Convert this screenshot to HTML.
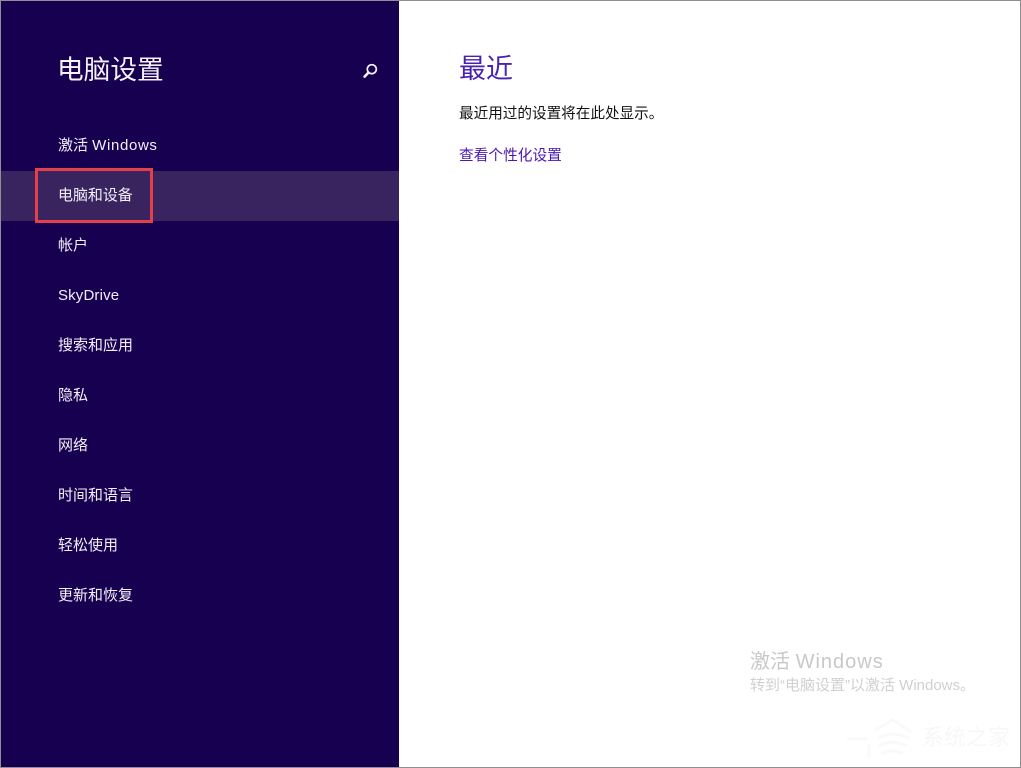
<!DOCTYPE html>
<html lang="zh">
<head>
<meta charset="utf-8">
<title>电脑设置</title>
<style>
html,body{margin:0;padding:0;background:#fff;}
body{width:1021px;height:768px;position:relative;overflow:hidden;font-family:"Liberation Sans","Noto Sans CJK SC",sans-serif;}
.t{position:absolute;white-space:nowrap;line-height:1;}
#side{position:absolute;left:0;top:0;width:399px;height:768px;background:#180050;}
#sel{position:absolute;left:0;top:171px;width:399px;height:50px;background:#39245f;}
.n{left:58px;font-size:15px;color:#f2eff8;}
#red{position:absolute;left:35px;top:168px;width:112px;height:49px;border:3px solid #e3404c;}
#frame{position:absolute;left:0;top:0;width:1019px;height:766px;border:1px solid #8f8f8f;pointer-events:none;}
.wm{color:#f7f7f7;}
.w{letter-spacing:.65px;}
</style>
</head>
<body>
<div id="side"></div>
<div id="sel"></div>
<div class="t" style="left:57px;top:57px;font-size:26.7px;color:#f4f2f8;">电脑设置</div>
<svg style="position:absolute;left:360px;top:60px;" width="20" height="20" viewBox="0 0 20 20"><circle cx="11.8" cy="9.2" r="4.5" fill="none" stroke="#f4f2f8" stroke-width="1.7"/><path d="M8.4 12.6L4.6 16.6" stroke="#f4f2f8" stroke-width="2.6" stroke-linecap="round"/></svg>
<div class="t n" style="top:138px;">激活 <span class="w">Windows</span></div>
<div class="t n" style="top:188px;font-size:15px;letter-spacing:-.05px;">电脑和设备</div>
<div class="t n" style="top:238px;">帐户</div>
<div class="t n" style="top:288px;letter-spacing:.15px;">SkyDrive</div>
<div class="t n" style="top:338px;">搜索和应用</div>
<div class="t n" style="top:388px;">隐私</div>
<div class="t n" style="top:438px;">网络</div>
<div class="t n" style="top:488px;">时间和语言</div>
<div class="t n" style="top:538px;">轻松使用</div>
<div class="t n" style="top:588px;">更新和恢复</div>
<div id="red"></div>
<div class="t" style="left:459px;top:56px;font-size:27px;color:#4a22b0;">最近</div>
<div class="t" style="left:459px;top:107px;font-size:14.6px;color:#111;">最近用过的设置将在此处显示。</div>
<div class="t" style="left:459px;top:149px;font-size:14.7px;color:#4a16b4;">查看个性化设置</div>
<div class="t" style="left:750px;top:652px;font-size:20px;color:#c8c8c8;">激活 <span style="letter-spacing:1px;">Windows</span></div>
<div class="t" style="left:750px;top:678px;font-size:15px;color:#d0d0d0;">转到“电脑设置”以激活 Windows。</div>
<svg style="position:absolute;left:845px;top:712px;" width="90" height="50" viewBox="0 0 90 50"><path d="M2 27H22M30 18L48 8L66 20M34 26C44 20 54 22 64 26M34 34C44 28 54 30 62 34M24 32V46M36 42C44 38 52 38 58 42" fill="none" stroke="#f9f9f9" stroke-width="3"/></svg>
<div class="t wm" style="left:922px;top:727px;font-size:22px;">系统之家</div>
<div id="frame"></div>
</body>
</html>
